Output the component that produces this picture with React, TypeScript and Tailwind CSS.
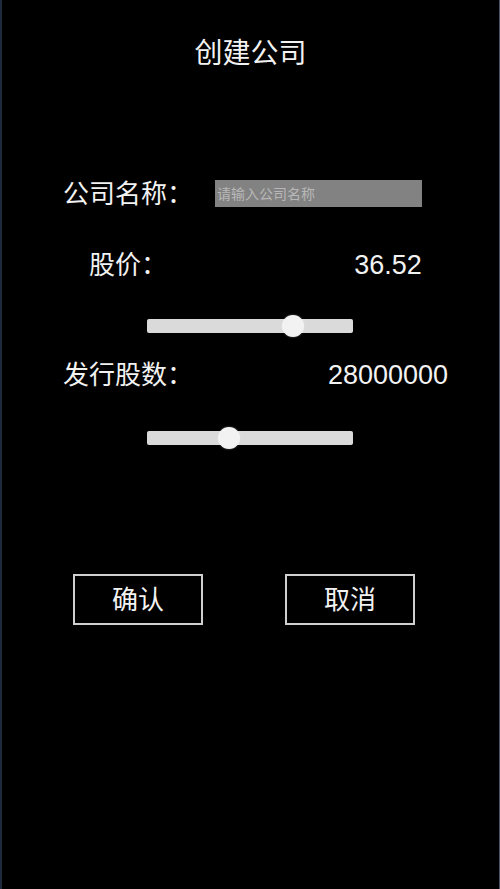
import React from 'react';

const font = { fontFamily: '"Liberation Sans", "Noto Sans CJK SC", sans-serif' };

function Slider({ value }: { value: number }) {
  return (
    <div className="relative ml-[145px] h-[22px] w-[206px] flex items-center">
      <div className="h-[14px] w-full rounded-[2px] bg-[#dadada]" />
      <div
        className="absolute top-0 h-[22px] w-[22px] -translate-x-1/2 rounded-full bg-[#f2f2f2] shadow-[0_0_2px_rgba(255,255,255,0.4)]"
        style={{ left: `${value * 100}%` }}
      />
    </div>
  );
}

export default function App() {
  return (
    <div
      className="h-[889px] w-full bg-black text-[#f2f2f2] border-l-2 border-r border-l-[#1c2a3c] border-r-[#4a5264] flex flex-col"
      style={font}
    >
      {/* title */}
      <div className="mt-[34px] h-[40px] text-center text-[28px] leading-[40px]">创建公司</div>

      {/* company name */}
      <div className="mt-[106px] flex h-[27px] items-center">
        <div className="ml-[61px] w-[130px] text-center text-[26px] leading-none">公司名称：</div>
        <input
          className="ml-[22px] h-[27px] w-[207px] bg-[#828282] px-[2px] text-[14px] text-[#bdbdbd] placeholder:text-[#b8b8b8] outline-none"
          placeholder="请输入公司名称"
        />
      </div>

      {/* price */}
      <div className="mt-[38px] flex h-[40px] items-center">
        <div className="ml-[61px] w-[130px] text-center text-[26px] leading-none">股价：</div>
        <div className="ml-[135px] w-[120px] text-center text-[27px] leading-none">36.52</div>
      </div>

      <div className="mt-[30px]">
        <Slider value={0.71} />
      </div>

      {/* shares */}
      <div className="mt-[18px] flex h-[40px] items-center">
        <div className="ml-[61px] w-[130px] text-center text-[26px] leading-none">发行股数：</div>
        <div className="ml-[135px] w-[120px] text-center text-[27px] leading-none">28000000</div>
      </div>

      <div className="mt-[32px]">
        <Slider value={0.4} />
      </div>

      {/* actions */}
      <div className="mt-[125px] flex">
        <button className="ml-[71px] h-[51px] w-[130px] border-2 border-[#cfcfcf] text-[26px] leading-none">
          确认
        </button>
        <button className="ml-[82px] h-[51px] w-[130px] border-2 border-[#cfcfcf] text-[26px] leading-none">
          取消
        </button>
      </div>
    </div>
  );
}
